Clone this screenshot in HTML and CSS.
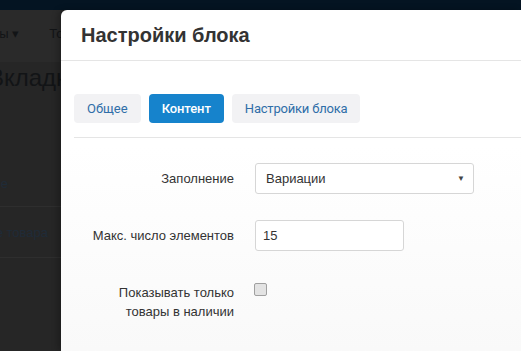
FILE: index.html
```html
<!DOCTYPE html>
<html lang="ru">
<head>
  <meta charset="UTF-8">
  <title>Настройки блока</title>
  <link rel="stylesheet" href="styles.css">
</head>
<body>

  <div class="topbar"></div>

  <div class="screen">
    <div class="backdrop">
      <div class="bg-nav">
        <span>Товары &#9662;</span>
        <span class="bg-nav-item">Товары</span>
      </div>
      <div class="bg-title"><span>Вкладки</span></div>
      <div class="bg-row bg-row-tall"><span class="bg-link">Название</span></div>
      <div class="bg-row"><span class="bg-link">Описание товара</span></div>
    </div>

    <div class="modal">
      <div class="modal-header">
        <h2>Настройки блока</h2>
      </div>

      <div class="modal-body">
        <div class="tabs">
          <a class="tab">Общее</a>
          <a class="tab active">Контент</a>
          <a class="tab">Настройки блока</a>
        </div>

        <div class="form">
          <label class="form-label" for="fill">Заполнение</label>
          <div class="select">
            <span>Вариации</span>
            <span class="caret">&#9660;</span>
          </div>

          <label class="form-label" for="max">Макс. число элементов</label>
          <input class="text-input" type="text" id="max" value="15">

          <label class="form-label multi" for="stock">Показывать только<br>товары в наличии</label>
          <div class="check-cell">
            <span class="checkbox" id="stock"></span>
          </div>
        </div>
      </div>
    </div>
  </div>

</body>
</html>
```

FILE: styles.css
```css
body {
  margin: 0;
  height: 351px;
  overflow: hidden;
  background: #262626;
  font-family: 'Liberation Sans', Arial, sans-serif;
  display: flex;
  flex-direction: column;
}

.topbar {
  height: 10px;
  background: #041422;
}

.screen {
  flex: 1;
  display: flex;
}

/* page behind the overlay */
.backdrop {
  width: 61px;
  overflow: hidden;
  color: #121416;
  display: flex;
  flex-direction: column;
}

.bg-nav {
  height: 52px;
  display: flex;
  justify-content: flex-end;
  align-items: center;
  gap: 30px;
  font-size: 13px;
  white-space: nowrap;
  background: #2a2a2a;
}

.bg-nav-item {
  margin-right: -33px;
  margin-top: -6px;
}

.bg-nav span:first-child {
  margin-top: -6px;
}

.bg-title {
  height: 52px;
  display: flex;
  justify-content: flex-end;
  align-items: center;
  font-size: 24px;
  white-space: nowrap;
}

.bg-title span {
  margin-right: -19px;
  margin-top: -20px;
}

.bg-row {
  height: 50px;
  border-bottom: 1px solid #2e2e2e;
  font-size: 13px;
  white-space: nowrap;
  display: flex;
  justify-content: flex-end;
  align-items: center;
}

.bg-row-tall {
  height: 93px;
  align-items: flex-end;
  padding-bottom: 15px;
  box-sizing: border-box;
}

.bg-link {
  color: #1f2b38;
  margin-right: 13px;
}

.bg-row-tall .bg-link {
  margin-right: 53px;
}

/* modal */
.modal {
  flex: 1;
  background: linear-gradient(#ffffff 40%, #f9f9f9);
  border-top-left-radius: 6px;
  box-shadow: -3px 0 6px rgba(0, 0, 0, 0.25);
  display: flex;
  flex-direction: column;
}

.modal-header {
  height: 50px;
  border-bottom: 1px solid #e5e5e5;
  padding: 0 20px;
  display: flex;
  align-items: center;
}

.modal-header h2 {
  margin: 0;
  font-size: 20px;
  font-weight: bold;
  color: #333;
}

.modal-body {
  padding: 33px 0 0 13px;
}

.tabs {
  display: flex;
  gap: 8px;
  padding-bottom: 14px;
  border-bottom: 1px solid #e5e5e5;
}

.tab {
  height: 29px;
  padding: 0 13px;
  display: flex;
  align-items: center;
  font-family: Roboto, sans-serif;
  font-size: 13px;
  color: #2f6ea8;
  background: #f2f2f4;
  border-radius: 4px;
  letter-spacing: -0.2px;
}

.tab:first-child {
  letter-spacing: 0;
}

.tab.active {
  background: #1683cc;
  color: #fff;
  font-weight: 500;
  letter-spacing: -0.1px;
}

.form {
  margin-top: 25px;
  display: grid;
  grid-template-columns: 160px 219px;
  column-gap: 21px;
  row-gap: 26px;
  align-items: center;
}

.form-label {
  text-align: right;
  font-size: 13px;
  color: #333;
}

.form-label.multi {
  align-self: start;
  line-height: 19px;
  margin-top: 6px;
}

.select {
  height: 31px;
  box-sizing: border-box;
  border: 1px solid #d6d6d6;
  border-radius: 3px;
  background: #fff;
  padding: 0 8px 0 10px;
  display: flex;
  align-items: center;
  justify-content: space-between;
  font-size: 13px;
  color: #333;
}

.caret {
  font-size: 8px;
  color: #444;
}

.text-input {
  width: 149px;
  height: 31px;
  box-sizing: border-box;
  border: 1px solid #d6d6d6;
  border-radius: 3px;
  padding: 0 7px;
  font-family: 'Liberation Sans', Arial, sans-serif;
  font-size: 13px;
  color: #333;
}

.check-cell {
  align-self: start;
  margin-top: 4px;
  padding-top: 2px;
}

.checkbox {
  display: block;
  width: 11px;
  height: 11px;
  margin-left: -1px;
  border: 1px solid #a0a0a0;
  border-radius: 2px;
  background: #e3e3e3;
}
```
